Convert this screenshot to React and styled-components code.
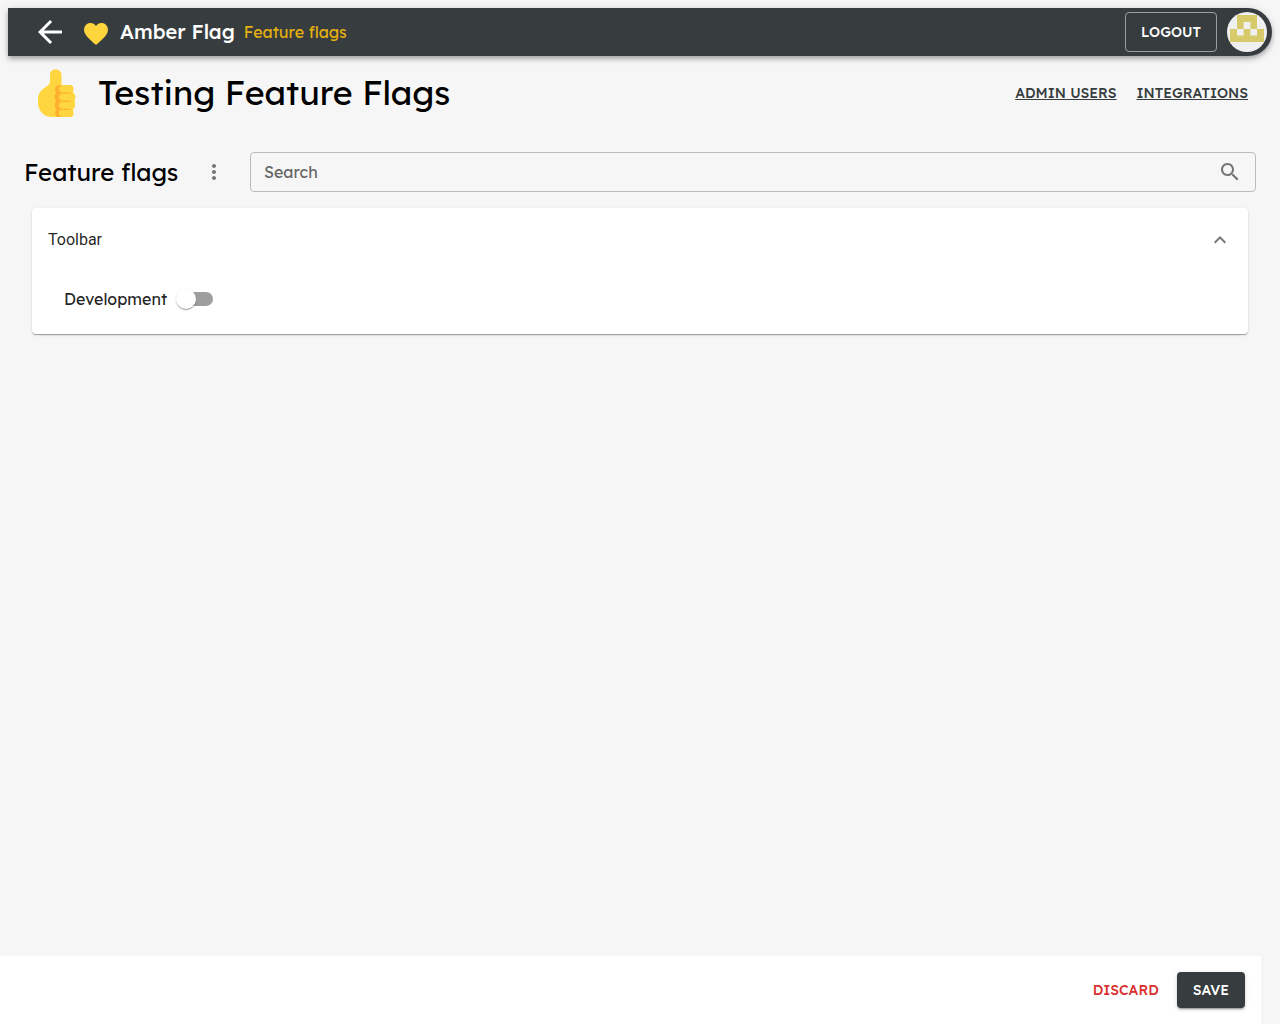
import React, { useState } from "react";
import styled, { createGlobalStyle } from "styled-components";

const GlobalStyle = createGlobalStyle`
  *, *::before, *::after { box-sizing: border-box; }
  body {
    margin: 0;
    background: #f6f6f6;
    color: #000;
    font-family: Lexend, Inter, "Liberation Sans", sans-serif;
    font-size: 16px;
    line-height: 24px;
  }
  button, input { font: inherit; }
  h1, h2, h3, p { margin: 0; }
`;

const Page = styled.div`
  display: flex;
  flex-direction: column;
  min-height: 100vh;
`;

const TopBar = styled.header`
  display: flex;
  align-items: center;
  height: 48px;
  margin: 8px 8px 0;
  padding: 0 5px 0 24px;
  border-radius: 0 24px 24px 0;
  background: #373d3f;
  color: #fff;
  box-shadow: 0 2px 4px -1px rgba(0, 0, 0, 0.2), 0 4px 5px rgba(0, 0, 0, 0.14),
    0 1px 10px rgba(0, 0, 0, 0.12);
`;

const IconButton = styled.button`
  display: grid;
  place-items: center;
  flex: none;
  width: ${(p) => p.$size}px;
  height: ${(p) => p.$size}px;
  padding: 0;
  border: 0;
  border-radius: 50%;
  background: none;
  color: ${(p) => p.$color || "#757575"};
  cursor: pointer;
`;

const Icon = styled.svg`
  display: block;
  flex: none;
  width: ${(p) => p.$size || 24}px;
  height: ${(p) => p.$size || 24}px;
  fill: currentColor;
`;

const Brand = styled.a`
  display: flex;
  align-items: center;
  gap: 12px;
  margin-left: 16px;
  color: inherit;
  font-size: 20px;
  font-weight: 500;
  line-height: 34px;
  text-decoration: none;
`;

const HeartIcon = styled.svg`
  width: 24px;
  height: 22px;
  margin-top: 4px;
`;

const Crumb = styled.a`
  margin-left: 9px;
  color: #e6b00e;
  text-decoration: none;
`;

const Button = styled.button`
  height: ${(p) => (p.$variant === "outlined" ? 40 : 36)}px;
  padding: 0 ${(p) => ({ outlined: 15, text: 8, contained: 16 })[p.$variant]}px;
  border: ${(p) => (p.$variant === "outlined" ? "1px solid #9b9e9f" : "0")};
  border-radius: 4px;
  background: ${(p) => (p.$variant === "contained" ? "#373d3f" : "transparent")};
  color: ${(p) => (p.$variant === "text" ? "#d9302f" : "#fff")};
  box-shadow: ${(p) =>
    p.$variant === "contained"
      ? "0 3px 1px -2px rgba(0,0,0,.2), 0 2px 2px rgba(0,0,0,.14), 0 1px 5px rgba(0,0,0,.12)"
      : "none"};
  font-size: 14px;
  font-weight: 500;
  text-transform: uppercase;
  cursor: pointer;
`;

const Account = styled.div`
  display: flex;
  align-items: center;
  gap: 10px;
  margin-left: auto;
`;

const Avatar = styled.svg`
  display: block;
  width: 40px;
  height: 40px;
  border-radius: 50%;
  background: #f0f0f0;
`;

const Main = styled.main`
  flex: 1;
  padding: 12px 24px 24px;
`;

const ProjectHeader = styled.div`
  display: flex;
  align-items: center;
  padding: 0 8px 0 13px;
`;

const ThumbIcon = styled.svg`
  flex: none;
  width: 40px;
  height: 50px;
`;

const ProjectTitle = styled.h1`
  margin-left: 21px;
  font-size: 34px;
  font-weight: 400;
  line-height: 50px;
`;

const ProjectLinks = styled.nav`
  display: flex;
  gap: 20px;
  margin-left: auto;
`;

const ProjectLink = styled.a`
  color: #373d3f;
  font-size: 14px;
  font-weight: 500;
  line-height: 22px;
  text-transform: uppercase;
`;

const Filters = styled.div`
  display: flex;
  align-items: center;
  margin-top: 34px;
`;

const SectionTitle = styled.h2`
  min-width: 170px;
  font-size: 24px;
  font-weight: 400;
  line-height: 40px;
`;

const SearchField = styled.label`
  display: flex;
  flex: 1;
  align-items: center;
  height: 40px;
  margin-left: 16px;
  padding: 0 13px;
  border: 1px solid #bcbcbc;
  border-radius: 4px;
  color: #757575;
`;

const SearchInput = styled.input`
  flex: 1;
  min-width: 0;
  padding: 0;
  border: 0;
  outline: 0;
  background: none;
  color: #212121;
  &::placeholder { color: #666; opacity: 1; }
`;

const Card = styled.section`
  margin: 16px 8px 0;
  border-radius: 4px;
  background: #fff;
  box-shadow: 0 2px 1px -1px rgba(0, 0, 0, 0.2), 0 1px 1px rgba(0, 0, 0, 0.14),
    0 1px 3px rgba(0, 0, 0, 0.12);
`;

const CardHeader = styled.button`
  display: flex;
  align-items: center;
  justify-content: space-between;
  width: 100%;
  height: 64px;
  padding: 0 16px;
  border: 0;
  background: none;
  color: rgba(0, 0, 0, 0.87);
  font-family: Roboto, "Liberation Sans", sans-serif;
  text-align: left;
  cursor: pointer;
`;

const Chevron = styled(Icon)`
  color: #757575;
  transform: rotate(${(p) => (p.$open ? 180 : 0)}deg);
`;

const CardBody = styled.div`
  display: flex;
  padding: 8px 32px 16px;
`;

const FlagRow = styled.label`
  display: flex;
  align-items: center;
  gap: 12px;
  height: 38px;
  color: rgba(0, 0, 0, 0.87);
  cursor: pointer;
`;

const Switch = styled.input`
  appearance: none;
  position: relative;
  width: 34px;
  height: 14px;
  margin: 0;
  border-radius: 7px;
  background: #9e9e9e;
  cursor: pointer;
  &::before {
    content: "";
    position: absolute;
    top: -3px;
    left: -3px;
    width: 20px;
    height: 20px;
    border-radius: 50%;
    background: #fff;
    box-shadow: 0 2px 1px -1px rgba(0, 0, 0, 0.2), 0 1px 1px rgba(0, 0, 0, 0.14),
      0 1px 3px rgba(0, 0, 0, 0.12);
  }
  &:checked { background: #e6b00e; }
  &:checked::before { left: 17px; }
`;

const Footer = styled.footer`
  position: sticky;
  bottom: 0;
  display: flex;
  justify-content: flex-end;
  gap: 10px;
  margin-right: 19px;
  padding: 16px;
  background: #fff;
`;

function Heart() {
  return (
    <HeartIcon viewBox="0 0 24 22" aria-hidden="true">
      <path
        fill="#ffd53e"
        d="M12 3C9.8-.6 4.700-.9 1.900 2C-.2 4.200-.5 7.800 1 10.600C3 14.400 6.700 17.500 10.700 21Q12 22 13.300 21C17.300 17.500 21 14.400 23 10.600C24.500 7.800 24.200 4.200 22.100 2C19.300-.9 14.200-.6 12 3Z"
      />
    </HeartIcon>
  );
}

function ThumbsUp() {
  return (
    <ThumbIcon viewBox="0 0 40 50" aria-hidden="true">
      <path
        fill="#ffd640"
        d="M13 7C13 3.500 15.300 1.200 18.300 1.200S24.500 3.300 24.500 7V17H34L36 22L38 35L34 49H15C7 49 1 43 1 34V31.500C1 25 4.500 22 8 19.500C11 17.500 13 16.500 13 13Z"
      />
      <path
        fill="#ffb02e"
        d="M23 17H33C36 17 37 23 34 25C37 27 37 31 34.500 33C37 35 37 39 34 41C36 43 35 49 31 49H22C18 49 17.200 44 19.700 41.500C17.300 39 17.300 35 19.500 33C17.300 31 17.300 27 19.500 25C16.500 22 18 17 23 17Z"
      />
      <g fill="#ffd640">
        <rect x="20" y="17" width="16.500" height="7.800" rx="3.800" />
        <rect x="20" y="25.200" width="18.500" height="7.700" rx="3.600" />
        <rect x="20" y="33.300" width="18" height="7.700" rx="3.600" />
        <rect x="20" y="41.400" width="16.500" height="7.600" rx="3.600" />
      </g>
      <path
        fill="#ffb02e"
        d="M25 17H23C18 17 16.500 22 19.500 25C17.300 27 17.300 31 19.500 33C17.300 35 17.300 39 19.700 41.500C17.200 44 18 49 22 49H24Q21.800 47.500 21.800 45.200Q21.800 43 24 41.700H32V40.700H24Q21.800 39.500 21.800 37.200Q21.800 35 24 33.700H33V32.600H24Q21.800 31.500 21.800 29Q21.800 27 24 25.600H32V24.500H25Q22 23.500 22 21Q22 18.200 25 17Z"
      />
    </ThumbIcon>
  );
}

function UserAvatar() {
  return (
    <Avatar viewBox="0 0 40 40" role="img" aria-label="Account">
      <path
        fill="#d6ca6b"
        fillRule="evenodd"
        d="M10 3H30V17H37V30H3V17H10ZM16.600 10V17H23.400V10ZM10 17V23.400H16.600V17ZM23.400 17V23.400H30V17Z"
      />
    </Avatar>
  );
}

export default function App() {
  const [open, setOpen] = useState(true);
  return (
    <>
      <GlobalStyle />
      <Page>
        <TopBar>
          <IconButton $size={36} $color="#fff" aria-label="Back">
            <Icon $size={36} viewBox="0 0 24 24">
              <path d="M20 11H7.830l5.590-5.590L12 4l-8 8 8 8 1.410-1.410L7.830 13H20v-2z" />
            </Icon>
          </IconButton>
          <Brand href="#home">
            <Heart />
            Amber Flag
          </Brand>
          <Crumb href="#flags">Feature flags</Crumb>
          <Account>
            <Button $variant="outlined">Logout</Button>
            <UserAvatar />
          </Account>
        </TopBar>
        <Main>
          <ProjectHeader>
            <ThumbsUp />
            <ProjectTitle>Testing Feature Flags</ProjectTitle>
            <ProjectLinks aria-label="Project">
              <ProjectLink href="#admins">Admin users</ProjectLink>
              <ProjectLink href="#integrations">Integrations</ProjectLink>
            </ProjectLinks>
          </ProjectHeader>
          <Filters>
            <SectionTitle>Feature flags</SectionTitle>
            <IconButton $size={40} aria-label="More options">
              <Icon viewBox="0 0 24 24">
                <path d="M12 8c1.100 0 2-.9 2-2s-.9-2-2-2-2 .9-2 2 .9 2 2 2zm0 2c-1.100 0-2 .9-2 2s.9 2 2 2 2-.9 2-2-.9-2-2-2zm0 6c-1.100 0-2 .9-2 2s.9 2 2 2 2-.9 2-2-.9-2-2-2z" />
              </Icon>
            </IconButton>
            <SearchField>
              <SearchInput type="text" placeholder="Search" aria-label="Search" />
              <Icon viewBox="0 0 24 24">
                <path d="M15.500 14h-.79l-.28-.27C15.410 12.590 16 11.110 16 9.500 16 5.910 13.090 3 9.500 3S3 5.910 3 9.500 5.910 16 9.500 16c1.610 0 3.090-.59 4.230-1.570l.27.28v.79l5 4.990L20.490 19l-4.990-5zm-6 0C7.010 14 5 11.990 5 9.500S7.010 5 9.500 5 14 7.010 14 9.500 11.990 14 9.500 14z" />
              </Icon>
            </SearchField>
          </Filters>
          <Card>
            <CardHeader aria-expanded={open} onClick={() => setOpen(!open)}>
              Toolbar
              <Chevron $open={open} viewBox="0 0 24 24">
                <path d="M16.590 8.590L12 13.170 7.410 8.590 6 10l6 6 6-6z" />
              </Chevron>
            </CardHeader>
            {open && (
              <CardBody>
                <FlagRow>
                  Development
                  <Switch type="checkbox" role="switch" />
                </FlagRow>
              </CardBody>
            )}
          </Card>
        </Main>
        <Footer>
          <Button $variant="text">Discard</Button>
          <Button $variant="contained">Save</Button>
        </Footer>
      </Page>
    </>
  );
}
